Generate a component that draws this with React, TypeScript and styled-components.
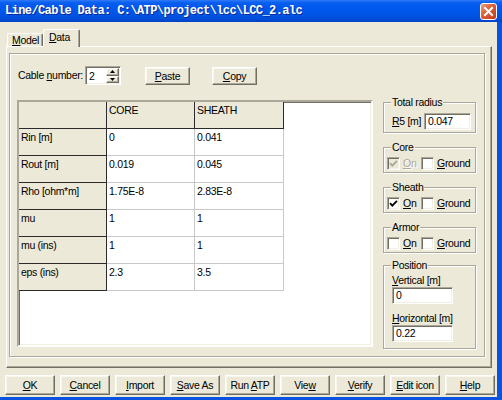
import React from "react";
import styled, { createGlobalStyle, css } from "styled-components";

const GlobalStyle = createGlobalStyle`
  html, body { margin: 0; padding: 0; background: #ECE9D8; }
  body {
    font-family: "Liberation Sans", Arial, sans-serif;
    font-size: 10.5px;
    letter-spacing: -0.3px;
    color: #000;
  }
  * { box-sizing: border-box; }
`;

/* classic 3D edges */
const sunken = css`
  border: 1px solid;
  border-color: #ACA899 #fff #fff #ACA899;
  box-shadow: inset 1px 1px 0 #716F64, inset -1px -1px 0 #F1EFE2;
`;
const raised = css`
  border: 1px solid;
  border-color: #fff #716F64 #716F64 #fff;
  box-shadow: inset -1px -1px 0 #ACA899, inset 1px 1px 0 #F7F6EF;
`;
const etched = css`
  border: 1px solid #ACA899;
  box-shadow: inset 1px 1px 0 #fff, 1px 1px 0 #fff;
`;

const Window = styled.div`
  width: 502px;
  height: 400px;
  display: flex;
  flex-direction: column;
  overflow: hidden;
  background: #ECE9D8;
`;

const TitleBar = styled.div`
  height: 22px;
  flex: none;
  display: flex;
  align-items: center;
  padding: 0 5px;
  background: linear-gradient(
    to bottom,
    #2E7BF8 0%,
    #0A5FEF 12%,
    #0058EE 30%,
    #0055E5 65%,
    #004DD8 88%,
    #0041C2 100%
  );
`;

const TitleText = styled.div`
  flex: 1;
  color: #fff;
  font-family: "Liberation Mono", "DejaVu Sans Mono", monospace;
  font-weight: bold;
  font-size: 12px;
  letter-spacing: -0.6px;
  white-space: nowrap;
  text-shadow: 1px 1px 0 #0A2A9A;
`;

const CloseButton = styled.div`
  width: 17px;
  height: 17px;
  border: 1px solid #fff;
  border-radius: 3px;
  background: linear-gradient(135deg, #EC9D80 0%, #DC5C37 45%, #C43D16 100%);
  display: flex;
  align-items: center;
  justify-content: center;
`;

const Body = styled.div`
  flex: 1;
  display: flex;
  flex-direction: column;
  padding: 0 5px 0 6px;
  border-right: 5px solid #0A52DF;
  border-bottom: 3px solid #0A52DF;
`;

const TabStrip = styled.div`
  height: 24px;
  flex: none;
  display: flex;
  align-items: flex-end;
  padding-left: 1px;
`;

const Tab = styled.div<{ $active?: boolean }>`
  position: relative;
  background: #ECE9D8;
  border-left: 1px solid #fff;
  border-top: 1px solid #fff;
  border-right: 1px solid #716F64;
  box-shadow: inset -1px 0 0 #ACA899;
  border-top-left-radius: 2px;
  border-top-right-radius: 2px;
  white-space: nowrap;
  ${(p) =>
    p.$active
      ? css`
          z-index: 1;
          width: 37px;
          height: 18px;
          margin-bottom: -1px;
          padding: 1px 0 0 5px;
        `
      : css`
          width: 36px;
          height: 13px;
          padding: 0 0 0 4px;
          line-height: 12px;
        `}
`;

const Panel = styled.div`
  height: 322px;
  flex: none;
  display: flex;
  flex-direction: column;
  padding: 6px 6px 10px 2px;
  border-top: 1px solid #fff;
  border-left: 1px solid #fff;
  border-right: 1px solid #716F64;
  border-bottom: 1px solid #716F64;
  box-shadow: inset -1px -1px 0 #ACA899;
`;

const Frame = styled.div`
  flex: 1;
  ${etched};
  padding: 12px 0 0 8px;
  display: flex;
  flex-direction: column;
`;

const TopRow = styled.div`
  height: 19px;
  display: flex;
  align-items: center;
`;

const FieldLabel = styled.div<{ $w?: number }>`
  min-width: ${(p) => (p.$w ? `${p.$w}px` : "0")};
  padding-right: 2px;
  flex: none;
  white-space: nowrap;
  line-height: 13px;
`;

const Spin = styled.div`
  width: 36px;
  height: 19px;
  display: flex;
  background: #fff;
  ${sunken};
  padding: 1px;
`;

const SpinValue = styled.div`
  flex: 1;
  padding: 1px 0 0 2px;
  line-height: 14px;
`;

const SpinButtons = styled.div`
  width: 13px;
  display: flex;
  flex-direction: column;
`;

const SpinArrow = styled.div`
  flex: 1;
  background: #ECE9D8;
  ${raised};
  display: flex;
  align-items: center;
  justify-content: center;
`;

const Button = styled.div<{ $w: number; $ml?: number }>`
  width: ${(p) => p.$w}px;
  height: ${(p) => (p.$w > 46 ? 20 : 18)}px;
  margin-left: ${(p) => p.$ml ?? 0}px;
  flex: none;
  background: #ECE9D8;
  ${raised};
  display: flex;
  align-items: center;
  justify-content: center;
  white-space: pre;
`;

const MainRow = styled.div`
  margin-top: 15px;
  display: flex;
  align-items: flex-start;
`;

const Grid = styled.div`
  width: 356px;
  height: 247px;
  margin-left: -1px;
  flex: none;
  background: #fff;
  border: 2px solid;
  border-color: #ACA899 #fff #fff #ACA899;
  box-shadow: inset 1px 1px 0 #716F64, inset -1px -1px 0 #F1EFE2;
`;

const Table = styled.div`
  display: grid;
  grid-template-columns: 88px 88px 89px;
  grid-auto-rows: 27px;
`;

const Cell = styled.div<{ $fixed?: boolean }>`
  padding: 2px 2px 0 2px;
  line-height: 13px;
  white-space: nowrap;
  overflow: hidden;
  ${(p) =>
    p.$fixed
      ? css`
          background: #ECE9D8;
          border-right: 1px solid #2B2B2B;
          border-bottom: 1px solid #2B2B2B;
        `
      : css`
          background: #fff;
          border-right: 1px solid #C8C8C8;
          border-bottom: 1px solid #C8C8C8;
        `}
`;

const RightCol = styled.div`
  width: 93px;
  margin-left: 10px;
  flex: none;
  display: flex;
  flex-direction: column;
`;

const GroupBox = styled.div<{ $h: number; $mt: number; $pad: string; $column?: boolean }>`
  position: relative;
  height: ${(p) => p.$h}px;
  margin-top: ${(p) => p.$mt}px;
  ${etched};
  padding: ${(p) => p.$pad};
  display: flex;
  flex-direction: ${(p) => (p.$column ? "column" : "row")};
  align-items: ${(p) => (p.$column ? "flex-start" : "center")};
`;

const Legend = styled.div`
  position: absolute;
  top: -7px;
  left: 7px;
  padding: 0 1px;
  line-height: 13px;
  background: #ECE9D8;
  white-space: nowrap;
`;

const TextField = styled.div<{ $w: number; $mt?: number }>`
  width: ${(p) => p.$w}px;
  height: 17px;
  margin-top: ${(p) => p.$mt ?? 0}px;
  flex: none;
  background: #fff;
  ${sunken};
  padding: 1px 0 0 3px;
  line-height: 13px;
`;

const CheckItem = styled.div<{ $w?: number }>`
  width: ${(p) => (p.$w ? `${p.$w}px` : "auto")};
  flex: none;
  display: flex;
  align-items: center;
  height: 13px;
`;

const CheckBox = styled.div<{ $disabled?: boolean }>`
  width: 13px;
  height: 13px;
  flex: none;
  background: ${(p) => (p.$disabled ? "#ECE9D8" : "#fff")};
  ${sunken};
  display: flex;
  align-items: center;
  justify-content: center;
`;

const CheckText = styled.span<{ $disabled?: boolean }>`
  margin-left: 3px;
  line-height: 13px;
  white-space: nowrap;
  ${(p) =>
    p.$disabled &&
    css`
      color: #ACA899;
      text-shadow: 1px 1px 0 #fff;
    `}
`;

const PosLabel = styled.div<{ $mt?: number }>`
  margin-top: ${(p) => p.$mt ?? 0}px;
  line-height: 13px;
  white-space: nowrap;
`;

const ButtonBar = styled.div`
  margin: 7px 0 0 -1px;
  height: 20px;
  display: flex;
  gap: 5px;
`;

const Key = styled.span`
  text-decoration: underline;
`;

const Mn = ({ text, at }: { text: string; at: number }) => (
  <span>
    {text.slice(0, at)}
    <Key>{text[at]}</Key>
    {text.slice(at + 1)}
  </span>
);

const Check = ({ checked, disabled, label }: { checked?: boolean; disabled?: boolean; label: string }) => (
  <>
    <CheckBox $disabled={disabled}>
      {checked && (
        <svg width="9" height="9" viewBox="0 0 9 9">
          <polyline
            points="1,4.2 3.3,6.6 8,1.8"
            fill="none"
            stroke={disabled ? "#ACA899" : "#000"}
            strokeWidth="1.8"
          />
        </svg>
      )}
    </CheckBox>
    <CheckText $disabled={disabled}>
      <Mn text={label} at={0} />
    </CheckText>
  </>
);

const rows: string[][] = [
  ["Rin [m]", "0", "0.041"],
  ["Rout [m]", "0.019", "0.045"],
  ["Rho [ohm*m]", "1.75E-8", "2.83E-8"],
  ["mu", "1", "1"],
  ["mu (ins)", "1", "1"],
  ["eps (ins)", "2.3", "3.5"],
];

const footer: [string, number][] = [
  ["OK", 0],
  ["Cancel", 0],
  ["Import", 0],
  ["Save As", 0],
  ["Run ATP", 4],
  ["View", 3],
  ["Verify", 0],
  ["Edit icon", 0],
  ["Help", 0],
];

const App = () => {
  return (
    <>
      <GlobalStyle />
      <Window>
        <TitleBar>
          <TitleText>Line/Cable Data: C:\ATP\project\lcc\LCC_2.alc</TitleText>
          <CloseButton>
            <svg width="11" height="11" viewBox="0 0 11 11">
              <path d="M2 2 L9 9 M9 2 L2 9" stroke="#fff" strokeWidth="2" strokeLinecap="square" />
            </svg>
          </CloseButton>
        </TitleBar>

        <Body>
          <TabStrip>
            <Tab>
              <Mn text="Model" at={0} />
            </Tab>
            <Tab $active>
              <Mn text="Data" at={0} />
            </Tab>
          </TabStrip>

          <Panel>
            <Frame>
              <TopRow>
                <FieldLabel $w={64}>
                  <Mn text="Cable number:" at={6} />
                </FieldLabel>
                <Spin>
                  <SpinValue>2</SpinValue>
                  <SpinButtons>
                    <SpinArrow>
                      <svg width="5" height="3" viewBox="0 0 5 3">
                        <polygon points="2.5,0 5,3 0,3" fill="#000" />
                      </svg>
                    </SpinArrow>
                    <SpinArrow>
                      <svg width="5" height="3" viewBox="0 0 5 3">
                        <polygon points="0,0 5,0 2.5,3" fill="#000" />
                      </svg>
                    </SpinArrow>
                  </SpinButtons>
                </Spin>
                <Button $w={45} $ml={24}>
                  <Mn text="Paste" at={0} />
                </Button>
                <Button $w={45} $ml={22}>
                  <Mn text="Copy" at={0} />
                </Button>
              </TopRow>

              <MainRow>
                <Grid>
                  <Table>
                    <Cell $fixed />
                    <Cell $fixed>CORE</Cell>
                    <Cell $fixed>SHEATH</Cell>
                    {rows.map((r) => (
                      <React.Fragment key={r[0]}>
                        <Cell $fixed>{r[0]}</Cell>
                        <Cell>{r[1]}</Cell>
                        <Cell>{r[2]}</Cell>
                      </React.Fragment>
                    ))}
                  </Table>
                </Grid>

                <RightCol>
                  <GroupBox $h={31} $mt={2} $pad="9px 4px 2px 8px">
                    <Legend>Total radius</Legend>
                    <FieldLabel $w={32}>
                      <Mn text="R5 [m]" at={0} />
                    </FieldLabel>
                    <TextField $w={47}>0.047</TextField>
                  </GroupBox>

                  <GroupBox $h={26} $mt={14} $pad="8px 2px 1px 3px">
                    <Legend>Core</Legend>
                    <CheckItem $w={34}>
                      <Check checked disabled label="On" />
                    </CheckItem>
                    <CheckItem>
                      <Check label="Ground" />
                    </CheckItem>
                  </GroupBox>

                  <GroupBox $h={26} $mt={14} $pad="8px 2px 1px 3px">
                    <Legend>Sheath</Legend>
                    <CheckItem $w={34}>
                      <Check checked label="On" />
                    </CheckItem>
                    <CheckItem>
                      <Check label="Ground" />
                    </CheckItem>
                  </GroupBox>

                  <GroupBox $h={26} $mt={14} $pad="8px 2px 1px 3px">
                    <Legend>Armor</Legend>
                    <CheckItem $w={34}>
                      <Check label="On" />
                    </CheckItem>
                    <CheckItem>
                      <Check label="Ground" />
                    </CheckItem>
                  </GroupBox>

                  <GroupBox $h={84} $mt={12} $pad="8px 4px 0 8px" $column>
                    <Legend>Position</Legend>
                    <PosLabel>
                      <Mn text="Vertical [m]" at={0} />
                    </PosLabel>
                    <TextField $w={61}>0</TextField>
                    <PosLabel $mt={8}>
                      <Mn text="Horizontal [m]" at={0} />
                    </PosLabel>
                    <TextField $w={61}>0.22</TextField>
                  </GroupBox>
                </RightCol>
              </MainRow>
            </Frame>
          </Panel>

          <ButtonBar>
            {footer.map(([t, at]) => (
              <Button key={t} $w={50}>
                <Mn text={t} at={at} />
              </Button>
            ))}
          </ButtonBar>
        </Body>
      </Window>
    </>
  );
};

export default App;
